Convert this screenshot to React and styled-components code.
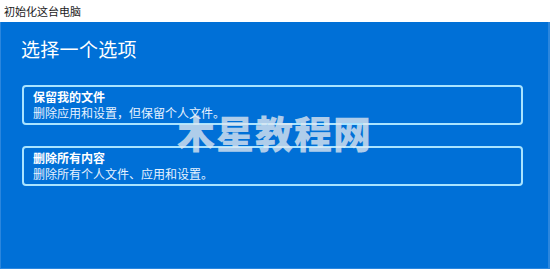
import React from "react";
import styled, { createGlobalStyle } from "styled-components";

const GlobalStyle = createGlobalStyle`
  html, body {
    margin: 0;
    padding: 0;
    background: #ffffff;
  }
  * {
    box-sizing: border-box;
  }
`;

const Window = styled.div`
  width: 550px;
  height: 269px;
  display: flex;
  flex-direction: column;
  position: relative;
  font-family: "Microsoft YaHei", "Noto Sans CJK SC", sans-serif;
  overflow: hidden;
`;

const TitleBar = styled.div`
  height: 22px;
  display: flex;
  align-items: center;
  padding-left: 4px;
  font-size: 11px;
  color: #1a1a1a;
  background: #ffffff;
`;

const Panel = styled.div`
  flex: 1;
  background: #0070d7;
  border-left: 1px solid #2b86dd;
  border-right: 2px solid #2b86dd;
  border-bottom: 1px solid #2b86dd;
  padding: 14px 25px 0 21px;
  display: flex;
  flex-direction: column;
`;

const Heading = styled.h1`
  margin: 0 0 0 -1px;
  font-size: 19px;
  font-weight: 400;
  line-height: 26px;
  color: #ffffff;
  letter-spacing: 0.3px;
`;

const Options = styled.div`
  display: flex;
  flex-direction: column;
  gap: 21px;
  margin-top: 23px;
`;

const Option = styled.div`
  height: 40px;
  border: 2px solid #a9e4ff;
  border-radius: 4px;
  padding: 3px 0 0 9px;
  display: flex;
  flex-direction: column;
  justify-content: center;
  color: #ffffff;
`;

const OptionTitle = styled.div`
  font-size: 12px;
  font-weight: 700;
  line-height: 16px;
  margin-top: -3px;
`;

const OptionText = styled.div`
  font-size: 12px;
  line-height: 16px;
  color: #e6f2ff;
`;

const Watermark = styled.div`
  position: absolute;
  left: 177px;
  top: 108px;
  font-size: 38px;
  font-weight: 900;
  line-height: 48px;
  letter-spacing: 1px;
  color: rgba(225, 232, 240, 0.78);
  font-family: "Noto Sans CJK SC", sans-serif;
  pointer-events: none;
`;

const options = [
  { title: "保留我的文件", text: "删除应用和设置，但保留个人文件。" },
  { title: "删除所有内容", text: "删除所有个人文件、应用和设置。" },
];

const App = () => {
  return (
    <Window>
      <GlobalStyle />
      <TitleBar>初始化这台电脑</TitleBar>
      <Panel>
        <Heading>选择一个选项</Heading>
        <Options>
          {options.map((o) => (
            <Option key={o.title}>
              <OptionTitle>{o.title}</OptionTitle>
              <OptionText>{o.text}</OptionText>
            </Option>
          ))}
        </Options>
      </Panel>
      <Watermark>木星教程网</Watermark>
    </Window>
  );
};

export default App;
